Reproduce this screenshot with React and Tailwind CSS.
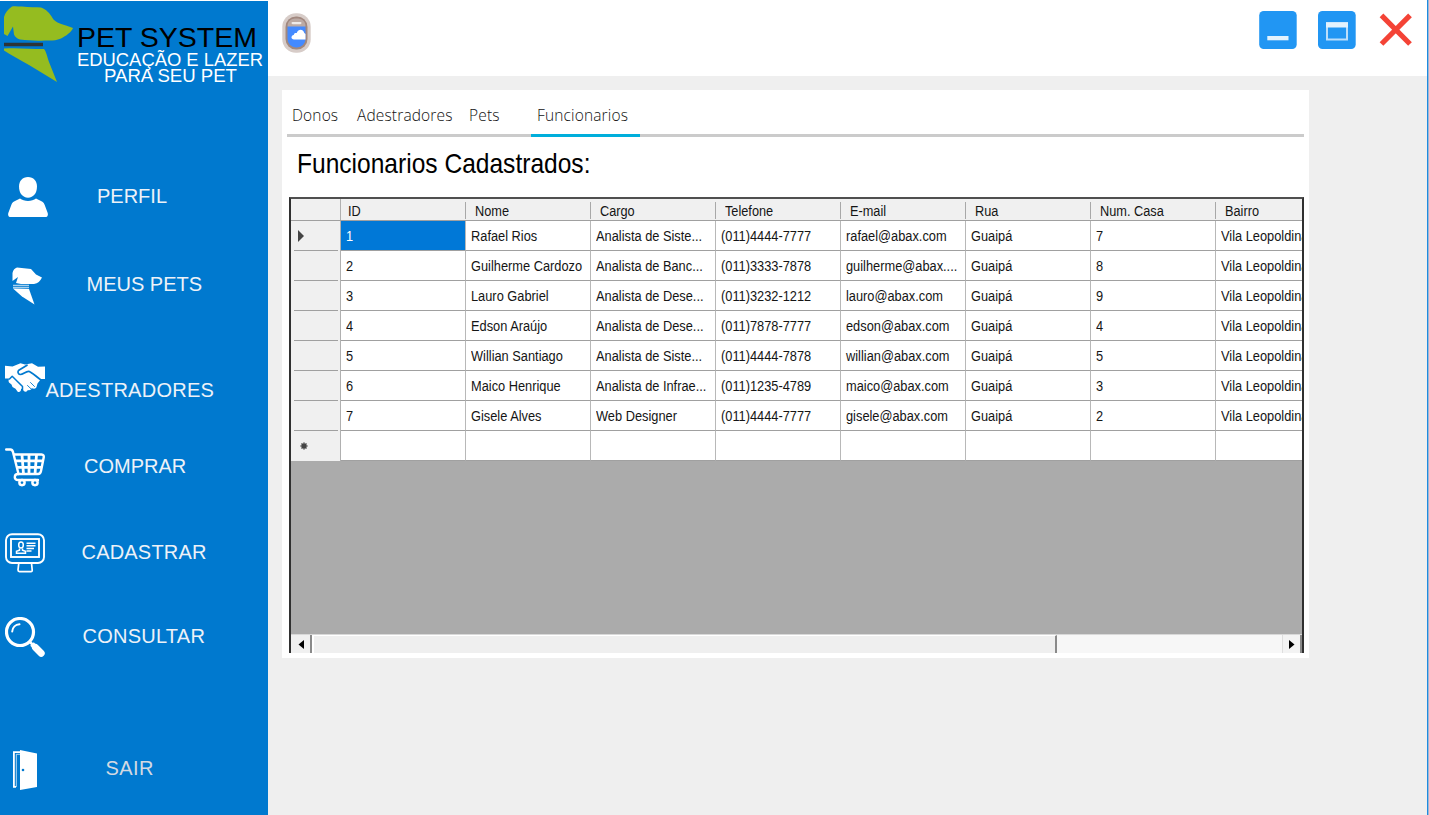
import React from "react";

const columns = ["ID", "Nome", "Cargo", "Telefone", "E-mail", "Rua", "Num. Casa", "Bairro"];

const rows = [
  ["1", "Rafael Rios", "Analista de Siste...", "(011)4444-7777", "rafael@abax.com", "Guaipá", "7", "Vila Leopoldina"],
  ["2", "Guilherme Cardozo", "Analista de Banc...", "(011)3333-7878", "guilherme@abax....", "Guaipá", "8", "Vila Leopoldina"],
  ["3", "Lauro Gabriel", "Analista de Dese...", "(011)3232-1212", "lauro@abax.com", "Guaipá", "9", "Vila Leopoldina"],
  ["4", "Edson Araújo", "Analista de Dese...", "(011)7878-7777", "edson@abax.com", "Guaipá", "4", "Vila Leopoldina"],
  ["5", "Willian Santiago", "Analista de Siste...", "(011)4444-7878", "willian@abax.com", "Guaipá", "5", "Vila Leopoldina"],
  ["6", "Maico Henrique", "Analista de Infrae...", "(011)1235-4789", "maico@abax.com", "Guaipá", "3", "Vila Leopoldina"],
  ["7", "Gisele Alves", "Web Designer", "(011)4444-7777", "gisele@abax.com", "Guaipá", "2", "Vila Leopoldina"],
  ["", "", "", "", "", "", "", ""],
];

function DogLogo() {
  return (
    <svg width="74" height="84" viewBox="0 0 74 84" className="block shrink-0">
      <path fill="#95bc20" d="M12 5.500C14 4.800 18 5.300 22 5.500C29 6.200 36 6.200 41 6.500C46 8 50 12.500 52.500 17C55 21 59 22.500 66 24.500L73 27C71.500 31 66 35 61 37.500C55 40 51 39.500 45 39.500C36 40 29 39.500 20 38.500C17 37.500 15 36 14 33.500L13 25.500L7.500 35L4 33V16C5 12 8 8 12 5.500Z" />
      <path stroke="#2d3436" strokeWidth="3.400" d="M4 43.500H43" />
      <path fill="#95bc20" d="M4 47.500C17 46.500 30 48 44 48C46 50 47 55 49 61L57 81L29 64C20 59 11 54 4 49.500Z" />
    </svg>
  );
}

function PersonIcon() {
  return (
    <svg width="40" height="40" viewBox="0 0 40 40" fill="white">
      <path d="M20 0C25.500 0 29 4 29 9.500C29 16 25.500 20.700 20 20.700S11 16 11 9.500C11 4 14.500 0 20 0Z" />
      <path d="M12 21.500C16 24.800 24 24.800 28 21.500L34 24.500C35.500 25.300 36.200 26.500 36.700 28L39.700 36C40.300 38.500 39.500 40 37 40H3C.5 40-.3 38.500 .3 36L3.300 28C3.800 26.500 4.500 25.300 6 24.500Z" />
    </svg>
  );
}

function DogIcon() {
  return (
    <svg width="30" height="38" viewBox="0 0 30 38" fill="white">
      <path d="M5 .5L19 2L24 7.500L30 10.500C28 14 26 16.500 22 17H9L4 16L6 10L.5 14V6C1 3 3 1 5 .5Z" />
      <path stroke="white" strokeOpacity=".65" strokeWidth="1.300" d="M1 18.300H17M1 20.500H17" />
      <path d="M1 21.500L17 22L22.500 37.500L10 29.500Z" />
    </svg>
  );
}

function HandshakeIcon() {
  return (
    <svg width="40" height="30" viewBox="0 0 40 30">
      <path fill="white" d="M0 2.800L7.500 3.500L15.500 .3L20 1.500L27 .2L33 3.800L40 3.500V16H36L32.500 20.500L31.500 24C31 25.500 29.500 26 28.300 25.500L26.500 25.200C26 27 24.500 27.500 23 27L21.500 28.500C20 29.200 18.700 28 18 26.700L16 25.500C16.500 28 14.500 29.600 12.700 28.700L10.500 25.800L7.500 24L6.500 21.500L4 19.500C3.300 18 3.500 16.500 4.500 15.500L0 15.500Z" />
      <g fill="none" stroke="#0079cf" strokeLinecap="round" strokeLinejoin="round">
        <path strokeWidth="1.700" d="M22 2.200L13.800 7.200C12.500 8.300 12.700 11 15 11.500C17.800 11.800 20.500 8.300 23.500 8.300C26 8.300 31 13.500 36 17" />
        <path strokeWidth="1.500" d="M4.500 16L7.200 13.300L17.500 23.500V26.500" />
        <path strokeWidth=".9" d="M22.500 22.500L26 25.800M25.500 19.500L29.500 23.500" />
      </g>
    </svg>
  );
}

function CartIcon() {
  return (
    <svg width="40" height="39" viewBox="0 0 40 39" fill="none" stroke="white" strokeLinejoin="round" strokeLinecap="round">
      <path strokeWidth="2.400" d="M1.200 1.500H5.500C7 1.500 7.500 2.500 8 4L13.500 26" />
      <path strokeWidth="2.400" d="M9 6.500H36.500C38.500 6.500 39 8 38.700 9.500L36 23C35.600 25 34.500 26 33 26H13C9 26 8.500 32 13 32H33" />
      <path strokeWidth="2.800" strokeLinecap="butt" d="M11 12.800H38M12 19.300H36.500M17 7L18.500 26M24 7V26M31.500 7L30 26" />
      <circle cx="17" cy="34.600" r="2.600" strokeWidth="2.500" />
      <circle cx="30" cy="34.600" r="2.600" strokeWidth="2.500" />
    </svg>
  );
}

function MonitorIcon() {
  return (
    <svg width="40" height="40" viewBox="0 0 40 40" fill="none" stroke="white">
      <rect x="1" y="1.200" width="38" height="28.800" rx="6" strokeWidth="1.900" />
      <rect x="6" y="6" width="28" height="18" strokeWidth="1.900" />
      <path strokeWidth="1.700" d="M13.800 30L13 37Q13 38.600 14.500 38.600H26Q27.300 38.600 27.200 37L26.500 30" />
      <ellipse cx="16" cy="12" rx="2.300" ry="3" strokeWidth="1.500" />
      <path strokeWidth="1.500" d="M14.500 15.500V17.200L11.500 18.200V20.300H20.500V18.200L17.500 17.200V15.500" />
      <path strokeWidth="1.500" d="M21.500 10.200H30.500M21.500 12.800H30.500M21.500 15.400H29M21.500 18H26.500" />
    </svg>
  );
}

function SearchIcon() {
  return (
    <svg width="40" height="40" viewBox="0 0 40 40" fill="none" stroke="white" strokeLinecap="round">
      <circle cx="15" cy="15" r="13.500" strokeWidth="3.200" />
      <path strokeWidth="2" d="M7.200 14.500C7.500 10.500 10.500 7.500 14.500 7.200" />
      <path strokeWidth="2.500" strokeLinecap="butt" d="M24.500 24.500L28 28" />
      <path strokeWidth="5" strokeLinecap="butt" d="M27 27L31 31" />
      <path strokeWidth="7" d="M30.500 30.500L36.200 36.200" />
    </svg>
  );
}

function DoorIcon() {
  return (
    <svg width="26" height="40" viewBox="0 0 26 40">
      <path fill="none" stroke="white" strokeWidth="1.800" d="M9 2.200H1.900V36.800H4" />
      <path fill="none" stroke="white" strokeWidth="1" opacity=".7" d="M8 4.300H4.300V37" />
      <path fill="white" d="M8 0L25 3.500V37L8 40Z" />
      <circle cx="11" cy="20" r="1.300" fill="#0079cf" />
    </svg>
  );
}

const menu = [
  { label: "PERFIL", icon: <PersonIcon />, row: "", pad: "pl-2 pt-0.5", text: "ml-[97px] text-[#edf2f8]" },
  { label: "MEUS PETS", icon: <DogIcon />, row: "mt-4", pad: "pl-[11.5px] pt-1", text: "ml-[86.500px] text-[#edf2f8]" },
  { label: "ADESTRADORES", icon: <HandshakeIcon />, row: "mt-[22px]", pad: "pl-[5px]", text: "ml-[45.500px] pt-6 tracking-[.25px] text-[#edf2f8]" },
  { label: "COMPRAR", icon: <CartIcon />, row: "mt-4", pad: "pl-[5px] pt-0.5", text: "ml-[84px] text-[#edf2f8]" },
  { label: "CADASTRAR", icon: <MonitorIcon />, row: "mt-3.5", pad: "pl-[5px] pt-0.5", text: "ml-[81.500px] tracking-[.2px] text-[#edf2f8]" },
  { label: "CONSULTAR", icon: <SearchIcon />, row: "mt-3", pad: "pl-[5px] pt-0.5", text: "ml-[82.500px] tracking-[.25px] text-[#edf2f8]" },
  { label: "SAIR", icon: <DoorIcon />, row: "mt-[60px]", pad: "pl-3 pt-[3px]", text: "ml-[105.500px] tracking-[.4px] text-[#d3d9e2]" },
];

function Sidebar() {
  return (
    <aside className="mt-px flex h-[814px] w-[268px] shrink-0 flex-col bg-[#0079cf]">
      <header className="flex h-[159px]">
        <DogLogo />
        <div className="flex w-[194px] flex-col items-start pt-[21px] pl-[3px] whitespace-nowrap">
          <h1 className="text-[28.500px] leading-[30px] text-black">PET SYSTEM</h1>
          <p className="-mt-px text-[18.400px] leading-[17px] text-white">EDUCAÇÃO E LAZER</p>
          <p className="ml-[27px] text-[18.600px] leading-[16px] text-white">PARA SEU PET</p>
        </div>
      </header>
      <nav>
        {menu.map((m) => (
          <a key={m.label} className={"grid h-[72px] items-center " + m.row}>
            <span className={"col-start-1 row-start-1 " + m.pad}>{m.icon}</span>
            <span className={"col-start-1 row-start-1 text-[20px] leading-6 whitespace-nowrap " + m.text}>{m.label}</span>
          </a>
        ))}
      </nav>
    </aside>
  );
}

function WindowIcon() {
  return (
    <svg width="29" height="40" viewBox="0 0 29 40">
      <rect x=".3" y=".3" width="28.400" height="39.400" rx="13.500" fill="#d7ccc8" />
      <rect x="3.500" y="3.500" width="22" height="33" rx="10.500" fill="#a1887f" />
      <rect x="5.500" y="6" width="18" height="28.500" rx="8.500" fill="#448aff" />
      <path fill="#bcaaa4" d="M5.500 13.500C5.500 8 9 5.500 14.500 5.500S23.500 8 23.500 13.500Z" />
      <rect x="9.500" y="9" width="10" height="2.200" rx="1.100" fill="#efebe9" />
      <path fill="white" d="M23.500 26.500H12C8.800 26.500 8.600 22.500 11.700 22C12.300 19.500 14 20 14.700 20C16.500 15.500 21 16 22.300 20L23.500 21Z" />
    </svg>
  );
}

function TopBar() {
  return (
    <header className="flex h-[76px] items-start bg-white">
      <div className="pt-[13px] pl-[14px]"><WindowIcon /></div>
      <div className="ml-auto flex gap-[21px] pt-[11px] pr-[13px]">
        <svg width="38" height="38" viewBox="0 0 38 38">
          <rect x=".2" width="37.500" height="38" rx="4.500" fill="#2196f3" />
          <rect x="8.300" y="25" width="21.200" height="4.300" fill="#e3f2fd" />
        </svg>
        <svg width="38" height="38" viewBox="0 0 38 38">
          <rect width="37.700" height="38" rx="4.500" fill="#2196f3" />
          <rect x="9" y="12" width="20" height="16.500" fill="none" stroke="#bbdefb" strokeWidth="2" />
          <rect x="8" y="11.500" width="22" height="5" fill="#e3f2fd" />
        </svg>
        <svg width="37" height="38" viewBox="0 0 37 38">
          <path stroke="#f44336" strokeWidth="5.200" d="M4.500 4.300L33 33M33 4.300L4.500 33" />
        </svg>
      </div>
    </header>
  );
}

function Tabs() {
  return (
    <nav className="ml-[5px] grid h-[47px] w-[1017px] grid-cols-[66px_112px_66px_109px_1fr] font-['Open_Sans',sans-serif] text-[15.500px] font-light tracking-[.15px] text-[#111]">
      <div className="border-b-[3px] border-[#cbcbcb] pt-[14px] pl-[5px]">Donos</div>
      <div className="border-b-[3px] border-[#cbcbcb] pt-[14px] pl-1">Adestradores</div>
      <div className="border-b-[3px] border-[#cbcbcb] pt-[14px] pl-1">Pets</div>
      <div className="border-b-[3px] border-[#00aedb] pt-[14px] pl-1.5">Funcionarios</div>
      <div className="border-b-[3px] border-[#cbcbcb]" />
    </nav>
  );
}

function DataGrid() {
  return (
    <div className="mt-[16px] ml-[7px] flex h-[456px] w-[1015px] flex-col overflow-hidden border-x-2 border-t-2 border-x-[#303030] border-t-[#505050] bg-[#ababab] text-[14px] leading-[18px] text-[#151515]">
      <div className="flex h-[22px] shrink-0 border-b border-[#a0a0a0] bg-[#f0f0f0]">
        <div className="w-[50px] shrink-0 border-r border-[#b0b0b0]" />
        {columns.map((c, i) => (
          <div key={c} className="flex w-[125px] shrink-0 pt-[3px] pb-px">
            <div className={"grow overflow-hidden border-r border-[#a8a8a8] whitespace-nowrap " + (i === 0 ? "pl-[7px]" : "pl-2.25")}>
              <span className="inline-block origin-left scale-x-[.91]">{c}</span>
            </div>
          </div>
        ))}
      </div>
      {rows.map((r, i) => (
        <div key={i} className="flex h-[30px] shrink-0">
          <div className="flex w-[50px] shrink-0 border-r border-[#b0b0b0] bg-[#f0f0f0] pr-[2px] pl-[3px]">
            <div className={"flex grow items-center pl-[3px] " + (i < 7 ? "border-b border-[#a0a0a0]" : "")}>
              {i === 0 && <svg width="8" height="12" viewBox="0 0 8 12"><path fill="#444" d="M1 0L7 6L1 12Z" /></svg>}
              {i === 7 && <svg width="10" height="10" viewBox="0 0 10 10" className="ml-0.5"><path stroke="#444" strokeWidth="1.500" d="M5 1.500V8.500M1.500 5H8.500M2.500 2.500L7.500 7.500M7.500 2.500L2.500 7.500" /></svg>}
            </div>
          </div>
          {r.map((v, j) => (
            <div key={j} className={"flex w-[125px] shrink-0 items-center overflow-hidden border-r border-b border-r-[#b8b8b8] border-b-[#a0a0a0] pl-[5px] whitespace-nowrap " + (i === 0 && j === 0 ? "bg-[#0078d7] text-white" : "bg-white")}>
              <span className="inline-block origin-left scale-x-[.915]">{v}</span>
            </div>
          ))}
        </div>
      ))}
      <div className="mt-auto flex h-[19px] shrink-0 border-t border-[#d8d8d8] bg-[#f7f7f7]">
        <div className="flex w-[21px] items-center justify-center border-r-2 border-[#8a8a8a] bg-[#f0f0f0]">
          <svg width="6" height="9" viewBox="0 0 6 9"><path d="M6 0V9L.5 4.500Z" /></svg>
        </div>
        <div className="w-[745px] border-t border-r-2 border-l-2 border-t-white border-r-[#8a8a8a] border-l-white bg-[#efefef]" />
        <div className="grow" />
        <div className="flex w-[20px] items-center justify-center border-r-2 border-l border-r-[#8a8a8a] border-l-[#dedede] bg-[#f3f3f3]">
          <svg width="6" height="9" viewBox="0 0 6 9"><path d="M0 0V9L5.500 4.500Z" /></svg>
        </div>
      </div>
    </div>
  );
}

export default function App() {
  return (
    <div className="flex h-[815px] w-[1429px] overflow-hidden bg-white font-['Liberation_Sans',Arial,sans-serif]">
      <Sidebar />
      <main className="flex min-w-0 grow flex-col bg-[#efefef]">
        <TopBar />
        <section className="mt-[14px] ml-[14px] h-[568px] w-[1027px] bg-white">
          <Tabs />
          <h2 className="mt-[11px] ml-[15px] h-[33px] origin-left scale-x-[.877] text-[28px] leading-[32px] whitespace-nowrap text-black">Funcionarios Cadastrados:</h2>
          <DataGrid />
        </section>
      </main>
      <div className="w-[2px] shrink-0 border-r border-[#9db9d3] bg-[#1f8ae0]" />
    </div>
  );
}
